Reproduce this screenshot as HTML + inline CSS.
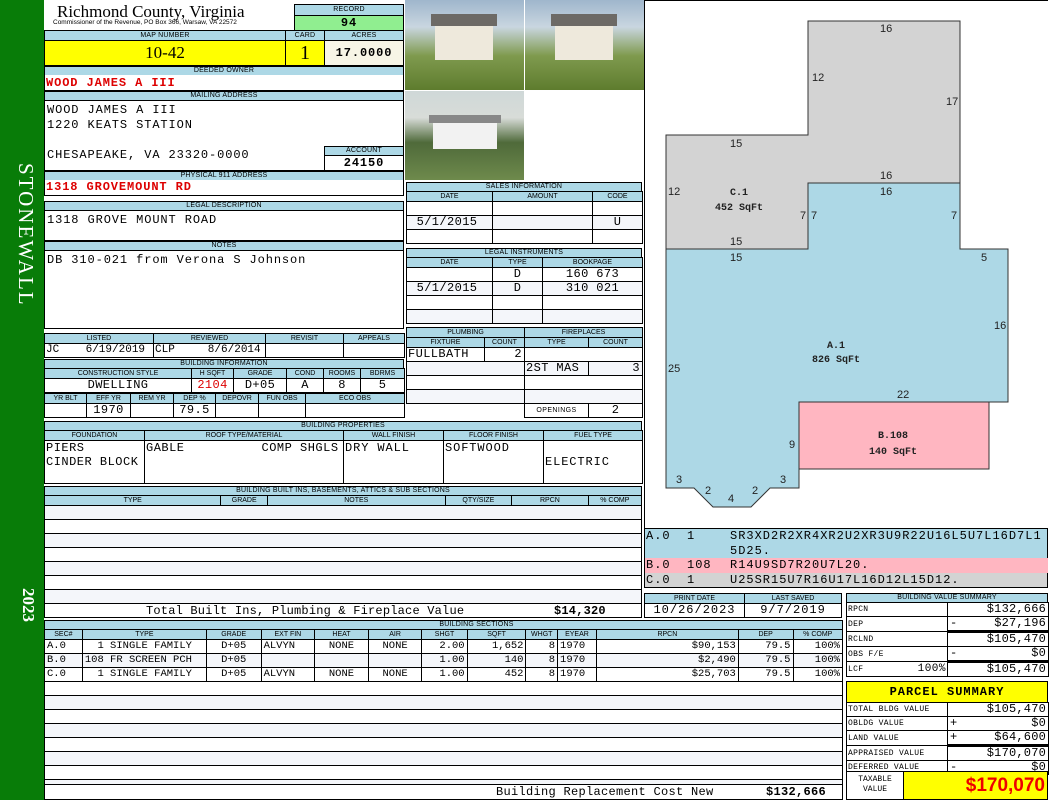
<!DOCTYPE html>
<html><head><meta charset="utf-8"><style>
*{box-sizing:border-box;margin:0;padding:0}
body{width:1050px;height:800px;position:relative;background:#fff;overflow:hidden;font-family:"Liberation Sans",sans-serif}
.a{position:absolute}
.h{position:absolute;background:#add8e6;border:1px solid #000;font:7px/9px "Liberation Sans",sans-serif;text-align:center;color:#000;letter-spacing:0.2px}
.b{position:absolute;border:1px solid #000;background:#fff}
.m{font-family:"Liberation Mono",monospace;font-size:12px;letter-spacing:.9px;color:#000}
.r{color:#d00;font-weight:bold}
table{position:absolute;border-collapse:collapse;table-layout:fixed}
td{border:1px solid #000;padding:0 2px;overflow:hidden;white-space:nowrap}
td.h2{background:#add8e6;font:7px "Liberation Sans",sans-serif;text-align:center;height:10px;padding:0;letter-spacing:0}
td.v{font:12px/13px "Liberation Mono",monospace;letter-spacing:.4px;height:14px}
tr.alt td.v{background:#f4f6fa}
.sec td.v{font-size:10.5px;letter-spacing:0}
.val td.v{font-size:12px;letter-spacing:.2px}
.val td.l{font:8px/13px "Liberation Mono",monospace;letter-spacing:.3px;padding:0 1px}
.c{text-align:center}.rt{text-align:right}
</style></head><body>
<!-- sidebar -->
<div class="a" style="left:0;top:0;width:44px;height:800px;background:#087c08"></div>
<div class="a" style="left:6px;top:163px;width:32px;height:160px;color:#fff;font:21px 'Liberation Serif',serif;writing-mode:vertical-rl;letter-spacing:2px">STONEWALL</div>
<div class="a" style="left:8px;top:588px;width:30px;height:40px;color:#fff;font:bold 17px 'Liberation Serif',serif;writing-mode:vertical-rl">2023</div>

<!-- title -->
<div class="a" style="left:57px;top:2px;font:17px 'Liberation Serif',serif">Richmond County, Virginia</div>
<div class="a" style="left:53px;top:19px;font:6.5px 'Liberation Sans',sans-serif">Commissioner of the Revenue, PO Box 366, Warsaw, VA 22572</div>
<div class="h" style="left:294px;top:4px;width:110px;height:12px;line-height:10px">RECORD</div>
<div class="b m" style="left:294px;top:15px;width:110px;height:16px;background:#90ee90;text-align:center;font-weight:bold;line-height:14px">94</div>
<div class="h" style="left:44px;top:30px;width:242px;height:11px">MAP NUMBER</div>
<div class="h" style="left:285px;top:30px;width:40px;height:11px">CARD</div>
<div class="h" style="left:324px;top:30px;width:80px;height:11px">ACRES</div>
<div class="b" style="left:44px;top:40px;width:242px;height:26px;background:#ff0;text-align:center;font:17px/24px 'Liberation Serif',serif">10-42</div>
<div class="b" style="left:285px;top:40px;width:40px;height:26px;background:#ff0;text-align:center;font:20px/24px 'Liberation Serif',serif">1</div>
<div class="b m" style="left:324px;top:40px;width:80px;height:26px;background:#f7f5e6;text-align:center;font-weight:bold;font-size:12px;line-height:24px">17.0000</div>
<div class="h" style="left:44px;top:66px;width:360px;height:10px;line-height:8px">DEEDED OWNER</div>
<div class="b m r" style="left:44px;top:75px;width:360px;height:16px;border-top:0;padding-left:1px;line-height:16px">WOOD JAMES A III</div>
<div class="h" style="left:44px;top:91px;width:360px;height:10px;line-height:8px">MAILING ADDRESS</div>
<div class="b m" style="left:44px;top:100px;width:360px;height:71px;padding:2px 2px;line-height:15px">WOOD JAMES A III<br>1220 KEATS STATION<br><br>CHESAPEAKE, VA 23320-0000</div>
<div class="h" style="left:324px;top:146px;width:80px;height:10px;line-height:8px">ACCOUNT</div>
<div class="b m" style="left:324px;top:155px;width:80px;height:16px;text-align:center;font-weight:bold;line-height:15px">24150</div>
<div class="h" style="left:44px;top:171px;width:360px;height:10px;line-height:8px">PHYSICAL 911 ADDRESS</div>
<div class="b m r" style="left:44px;top:180px;width:360px;height:16px;border-top:0;padding-left:1px;line-height:15px">1318 GROVEMOUNT RD</div>
<div class="h" style="left:44px;top:201px;width:360px;height:10px;line-height:8px">LEGAL DESCRIPTION</div>
<div class="b m" style="left:44px;top:210px;width:360px;height:31px;padding:2px">1318 GROVE MOUNT ROAD</div>
<div class="h" style="left:44px;top:241px;width:360px;height:10px;line-height:8px">NOTES</div>
<div class="b m" style="left:44px;top:250px;width:360px;height:79px;padding:2px">DB 310-021 from Verona S Johnson</div>

<table style="left:44px;top:333px;width:360px">
<col style="width:109px"><col style="width:112px"><col style="width:78px"><col style="width:61px">
<tr><td class="h2">LISTED</td><td class="h2">REVIEWED</td><td class="h2">REVISIT</td><td class="h2">APPEALS</td></tr>
<tr><td class="v" style="padding:0 1px;letter-spacing:0;font-size:11px">JC&nbsp;&nbsp;&nbsp;&nbsp;6/19/2019</td><td class="v" style="padding:0 1px;letter-spacing:0;font-size:11px">CLP&nbsp;&nbsp;&nbsp;&nbsp;&nbsp;8/6/2014</td><td class="v"></td><td class="v"></td></tr>
</table>
<div class="h" style="left:44px;top:359px;width:360px;height:10px;line-height:8px">BUILDING INFORMATION</div>
<table style="left:44px;top:368px;width:360px">
<col style="width:112px"><col style="width:35px"><col style="width:42px"><col style="width:53px"><col style="width:37px"><col style="width:37px"><col style="width:44px">
<tr><td class="h2" colspan="2">CONSTRUCTION STYLE</td><td class="h2">H SQFT</td><td class="h2">GRADE</td><td class="h2">COND</td><td class="h2">ROOMS</td><td class="h2">BDRMS</td></tr>
<tr><td class="v c" colspan="2">DWELLING</td><td class="v c r">2104</td><td class="v c">D+05</td><td class="v c">A</td><td class="v c">8</td><td class="v c">5</td></tr>
</table>
<table style="left:44px;top:393px;width:360px">
<col style="width:42px"><col style="width:44px"><col style="width:43px"><col style="width:42px"><col style="width:43px"><col style="width:47px"><col style="width:99px">
<tr><td class="h2">YR BLT</td><td class="h2">EFF YR</td><td class="h2">REM YR</td><td class="h2">DEP %</td><td class="h2">DEPOVR</td><td class="h2">FUN OBS</td><td class="h2">ECO OBS</td></tr>
<tr><td class="v"></td><td class="v c">1970</td><td class="v"></td><td class="v c">79.5</td><td class="v"></td><td class="v"></td><td class="v"></td></tr>
</table>

<!-- building properties -->
<div class="h" style="left:44px;top:421px;width:598px;height:10px;line-height:8px">BUILDING PROPERTIES</div>
<table style="left:44px;top:430px;width:598px">
<col style="width:100px"><col style="width:199px"><col style="width:100px"><col style="width:100px"><col style="width:99px">
<tr><td class="h2">FOUNDATION</td><td class="h2">ROOF TYPE/MATERIAL</td><td class="h2">WALL FINISH</td><td class="h2">FLOOR FINISH</td><td class="h2">FUEL TYPE</td></tr>
<tr><td class="m" style="height:43px;vertical-align:top;line-height:14px;padding:0 1px;letter-spacing:.5px">PIERS<br>CINDER BLOCK</td><td class="m" style="vertical-align:top;line-height:14px;padding:0 1px;letter-spacing:.5px">GABLE&nbsp;&nbsp;&nbsp;&nbsp;&nbsp;&nbsp;&nbsp;&nbsp;&nbsp;&nbsp;COMP SHGLS</td><td class="m" style="vertical-align:top;line-height:14px;padding:0 1px">DRY WALL</td><td class="m" style="vertical-align:top;line-height:14px;padding:0 1px">SOFTWOOD</td><td class="m" style="vertical-align:top;line-height:14px;padding:14px 1px 0">ELECTRIC</td></tr>
</table>

<!-- built ins -->
<div class="h" style="left:44px;top:486px;width:598px;height:10px;line-height:8px">BUILDING BUILT INS, BASEMENTS, ATTICS &amp; SUB SECTIONS</div>
<table style="left:44px;top:495px;width:598px">
<col style="width:159px"><col style="width:42px"><col style="width:160px"><col style="width:60px"><col style="width:69px"><col style="width:48px">
<tr><td class="h2">TYPE</td><td class="h2">GRADE</td><td class="h2">NOTES</td><td class="h2">QTY/SIZE</td><td class="h2">RPCN</td><td class="h2">% COMP</td></tr>
</table>
<div class="b" style="left:44px;top:505px;width:598px;height:113px;background:repeating-linear-gradient(#f4f6fa 0 13px,#000 13px 14px,#fff 14px 27px,#000 27px 28px)"></div>
<div class="b m" style="left:44px;top:603px;width:598px;height:15px;line-height:14px;letter-spacing:.2px"><span class="a" style="left:101px">Total Built Ins, Plumbing &amp; Fireplace Value</span><span class="a" style="left:509px;font-weight:bold">$14,320</span></div>

<!-- building sections -->
<div class="h" style="left:44px;top:620px;width:799px;height:10px;line-height:8px"><span style="position:relative;left:33px">BUILDING SECTIONS</span></div>
<table class="sec" style="left:44px;top:629px;width:799px">
<col style="width:36px"><col style="width:118px"><col style="width:52px"><col style="width:51px"><col style="width:51px"><col style="width:51px"><col style="width:43px"><col style="width:56px"><col style="width:30px"><col style="width:37px"><col style="width:135px"><col style="width:52px"><col style="width:47px">
<tr><td class="h2">SEC#</td><td class="h2">TYPE</td><td class="h2">GRADE</td><td class="h2">EXT FIN</td><td class="h2">HEAT</td><td class="h2">AIR</td><td class="h2">SHGT</td><td class="h2">SQFT</td><td class="h2">WHGT</td><td class="h2">EYEAR</td><td class="h2">RPCN</td><td class="h2">DEP</td><td class="h2">% COMP</td></tr>
<tr><td class="v">A.0</td><td class="v">&nbsp;&nbsp;1 SINGLE FAMILY</td><td class="v c">D+05</td><td class="v">ALVYN</td><td class="v c">NONE</td><td class="v c">NONE</td><td class="v rt">2.00</td><td class="v rt">1,652</td><td class="v rt">8</td><td class="v">1970</td><td class="v rt">$90,153</td><td class="v rt">79.5</td><td class="v rt">100%</td></tr>
<tr class="alt"><td class="v">B.0</td><td class="v">108 FR SCREEN PCH</td><td class="v c">D+05</td><td class="v"></td><td class="v"></td><td class="v"></td><td class="v rt">1.00</td><td class="v rt">140</td><td class="v rt">8</td><td class="v">1970</td><td class="v rt">$2,490</td><td class="v rt">79.5</td><td class="v rt">100%</td></tr>
<tr><td class="v">C.0</td><td class="v">&nbsp;&nbsp;1 SINGLE FAMILY</td><td class="v c">D+05</td><td class="v">ALVYN</td><td class="v c">NONE</td><td class="v c">NONE</td><td class="v rt">1.00</td><td class="v rt">452</td><td class="v rt">8</td><td class="v">1970</td><td class="v rt">$25,703</td><td class="v rt">79.5</td><td class="v rt">100%</td></tr>
</table>
<div class="b" style="left:44px;top:682px;width:799px;height:118px;border-top:0;background:repeating-linear-gradient(#fff 0 13px,#000 13px 14px,#f4f6fa 14px 27px,#000 27px 28px)"></div>
<div class="a m" style="left:44px;top:784px;width:799px;height:16px;background:#fff;border:1px solid #000;line-height:14px;letter-spacing:.3px"><span class="a" style="left:451px">Building Replacement Cost New</span><span class="a" style="left:721px;font-weight:bold">$132,666</span></div>

<!-- photos -->
<div class="a" style="left:405px;top:0;width:119px;height:90px;background:linear-gradient(#9fb6cc 0,#c9d6e0 30%,#7f9a4e 62%,#5e7c2e 100%)"><div class="a" style="left:30px;top:22px;width:58px;height:38px;background:#eee9dc"></div><div class="a" style="left:26px;top:14px;width:66px;height:12px;background:#6d6a66"></div></div>
<div class="a" style="left:525px;top:0;width:119px;height:90px;background:linear-gradient(#9fb6cc 0,#c9d6e0 30%,#7f9a4e 62%,#5e7c2e 100%)"><div class="a" style="left:30px;top:22px;width:58px;height:38px;background:#eee9dc"></div><div class="a" style="left:26px;top:14px;width:66px;height:12px;background:#6d6a66"></div></div>
<div class="a" style="left:405px;top:91px;width:119px;height:89px;background:linear-gradient(#cfd8d8 0,#d8dcd8 30%,#4f6a3a 58%,#6e8a4c 100%)"><div class="a" style="left:28px;top:30px;width:64px;height:28px;background:#f2f2f2"></div><div class="a" style="left:24px;top:24px;width:72px;height:8px;background:#888"></div></div>

<!-- sales -->
<div class="h" style="left:406px;top:182px;width:236px;height:10px;line-height:8px">SALES INFORMATION</div>
<table style="left:406px;top:191px;width:236px">
<col style="width:86px"><col style="width:100px"><col style="width:50px">
<tr><td class="h2">DATE</td><td class="h2">AMOUNT</td><td class="h2">CODE</td></tr>
<tr><td class="v"></td><td class="v"></td><td class="v"></td></tr>
<tr class="alt"><td class="v">&nbsp;5/1/2015</td><td class="v"></td><td class="v c">U</td></tr>
<tr><td class="v"></td><td class="v"></td><td class="v"></td></tr>
</table>
<div class="h" style="left:406px;top:248px;width:236px;height:10px;line-height:8px">LEGAL INSTRUMENTS</div>
<table style="left:406px;top:257px;width:236px">
<col style="width:86px"><col style="width:50px"><col style="width:100px">
<tr><td class="h2">DATE</td><td class="h2">TYPE</td><td class="h2">BOOKPAGE</td></tr>
<tr><td class="v"></td><td class="v c">D</td><td class="v c">160 673</td></tr>
<tr class="alt"><td class="v">&nbsp;5/1/2015</td><td class="v c">D</td><td class="v c">310 021</td></tr>
<tr><td class="v"></td><td class="v"></td><td class="v"></td></tr>
<tr class="alt"><td class="v"></td><td class="v"></td><td class="v"></td></tr>
</table>
<table style="left:406px;top:327px;width:236px">
<col style="width:78px"><col style="width:40px"><col style="width:64px"><col style="width:54px">
<tr><td class="h2" colspan="2">PLUMBING</td><td class="h2" colspan="2">FIREPLACES</td></tr>
<tr><td class="h2">FIXTURE</td><td class="h2">COUNT</td><td class="h2">TYPE</td><td class="h2">COUNT</td></tr>
<tr><td class="v" style="padding:0 1px">FULLBATH</td><td class="v rt">2</td><td class="v" colspan="2"></td></tr>
<tr class="alt"><td class="v" colspan="2" style="border-bottom:1px solid #000"></td><td class="v" style="padding:0 1px">2ST MAS</td><td class="v rt">3</td></tr>
<tr><td class="v" colspan="2"></td><td class="v" colspan="2"></td></tr>
<tr class="alt"><td class="v" colspan="2"></td><td class="v" colspan="2"></td></tr>
<tr><td colspan="2" style="border:0;border-top:1px solid #000;background:#fff"></td><td class="v c" style="font:7px 'Liberation Sans',sans-serif">OPENINGS</td><td class="v c">2</td></tr>
</table>

<!-- sketch -->
<div class="b" style="left:644px;top:0;width:404px;height:529px;border-right:0"></div>
<svg class="a" style="left:0;top:0" width="1050" height="530">
<g stroke="#333" stroke-width="1">
<polygon fill="#d3d3d3" points="808,21 960,21 960,183 808,183 808,249 666,249 666,135 808,135"/>
<polygon fill="#add8e6" points="666,249 808,249 808,183 960,183 960,249 1008,249 1008,402 799,402 799,488 770,488 751,507 713,507 694,488 666,488"/>
<polygon fill="#ffb6c1" points="799,402 989,402 989,469 799,469"/>
</g>
<g font-family="Liberation Sans,sans-serif" font-size="11" fill="#222">
<text x="880" y="32">16</text><text x="812" y="81">12</text><text x="946" y="105">17</text><text x="730" y="147">15</text><text x="880" y="179">16</text><text x="880" y="195">16</text><text x="668" y="195">12</text><text x="800" y="219">7</text><text x="811" y="219">7</text><text x="951" y="219">7</text><text x="730" y="245">15</text><text x="730" y="261">15</text><text x="981" y="261">5</text><text x="994" y="329">16</text><text x="668" y="372">25</text><text x="897" y="398">22</text><text x="789" y="448">9</text><text x="676" y="483">3</text><text x="705" y="494">2</text><text x="728" y="502">4</text><text x="752" y="494">2</text><text x="780" y="483">3</text>
</g>
<g font-family="Liberation Mono,monospace" font-size="10" fill="#222" text-anchor="middle" font-weight="bold">
<text x="739" y="195">C.1</text><text x="739" y="210">452 SqFt</text>
<text x="836" y="348">A.1</text><text x="836" y="362">826 SqFt</text>
<text x="893" y="438">B.108</text><text x="893" y="454">140 SqFt</text>
</g>
</svg>

<!-- sketch legend -->
<div class="a m" style="left:644px;top:528px;width:404px;height:30px;background:#add8e6;border:1px solid #000;border-bottom:0;line-height:15px;padding-left:1px;letter-spacing:1px"><span class="a" style="left:1px;top:0">A.0&nbsp;&nbsp;1</span><span class="a" style="left:85px;top:0;width:318px;word-break:break-all">SR3XD2R2XR4XR2U2XR3U9R22U16L5U7L16D7L15D25.</span></div>
<div class="a m" style="left:644px;top:558px;width:404px;height:15px;background:#ffb6c1;border-left:1px solid #000;line-height:15px;letter-spacing:1px"><span class="a" style="left:1px">B.0&nbsp;&nbsp;108</span><span class="a" style="left:85px">R14U9SD7R20U7L20.</span></div>
<div class="a m" style="left:644px;top:573px;width:404px;height:15px;background:#d3d3d3;border:1px solid #000;border-top:0;line-height:14px;letter-spacing:1px"><span class="a" style="left:1px">C.0&nbsp;&nbsp;1</span><span class="a" style="left:85px">U25SR15U7R16U17L16D12L15D12.</span></div>

<table style="left:644px;top:593px;width:197px">
<col style="width:100px"><col style="width:97px">
<tr><td class="h2">PRINT DATE</td><td class="h2">LAST SAVED</td></tr>
<tr><td class="v c" style="letter-spacing:1px">10/26/2023</td><td class="v c" style="letter-spacing:1px">9/7/2019</td></tr>
</table>

<!-- value summary -->
<div class="h" style="left:846px;top:593px;width:202px;height:10px;line-height:8px">BUILDING VALUE SUMMARY</div>
<table class="val" style="left:846px;top:602px;width:202px">
<col style="width:101px"><col style="width:101px">
<tr><td class="v l">RPCN</td><td class="v rt">$132,666</td></tr>
<tr><td class="v l">DEP</td><td class="v rt" style="border-bottom:3px solid #000"><span style="float:left">-</span>$27,196</td></tr>
<tr><td class="v l">RCLND</td><td class="v rt">$105,470</td></tr>
<tr><td class="v l">OBS F/E</td><td class="v rt" style="border-bottom:3px solid #000"><span style="float:left">-</span>$0</td></tr>
<tr><td class="v l">LCF<span style="float:right;font-size:11px;letter-spacing:.5px">100%</span></td><td class="v rt">$105,470</td></tr>
</table>

<div class="b" style="left:846px;top:681px;width:202px;height:22px;background:#ff0;text-align:center;font:bold 12px/20px 'Liberation Mono',monospace;letter-spacing:1px">PARCEL SUMMARY</div>
<table class="val" style="left:846px;top:702px;width:202px">
<col style="width:101px"><col style="width:101px">
<tr><td class="v l">TOTAL BLDG VALUE</td><td class="v rt">$105,470</td></tr>
<tr><td class="v l">OBLDG VALUE</td><td class="v rt"><span style="float:left">+</span>$0</td></tr>
<tr><td class="v l">LAND VALUE</td><td class="v rt" style="border-bottom:3px solid #000"><span style="float:left">+</span>$64,600</td></tr>
<tr><td class="v l">APPRAISED VALUE</td><td class="v rt">$170,070</td></tr>
<tr><td class="v l">DEFERRED VALUE</td><td class="v rt"><span style="float:left">-</span>$0</td></tr>
</table>
<div class="b" style="left:846px;top:771px;width:58px;height:29px;font:8px/10px 'Liberation Mono',monospace;text-align:center;padding-top:3px">TAXABLE<br>VALUE</div>
<div class="b" style="left:903px;top:771px;width:145px;height:29px;background:#ff0;color:#e00;font:bold 19px/27px 'Liberation Sans',sans-serif;text-align:right;padding-right:2px">$170,070</div>
</body></html>
